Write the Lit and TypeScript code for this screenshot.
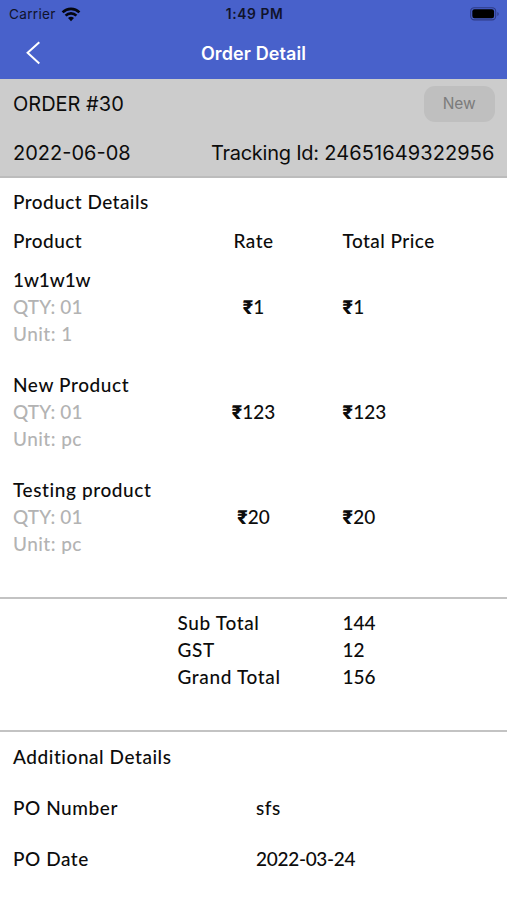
import { LitElement, html, css } from "lit";
import { customElement, property } from "lit/decorators.js";

interface Product {
  name: string;
  qty: string;
  unit: string;
  rate: number;
  total: number;
}

const PRODUCTS: Product[] = [
  { name: "1w1w1w", qty: "01", unit: "1", rate: 1, total: 1 },
  { name: "New Product", qty: "01", unit: "pc", rate: 123, total: 123 },
  { name: "Testing product", qty: "01", unit: "pc", rate: 20, total: 20 },
];

@customElement("status-bar")
class StatusBar extends LitElement {
  static styles = css`
    :host {
      display: grid;
      grid-template-columns: 1fr auto 1fr;
      align-items: center;
      height: 27px;
      padding: 0 7px 0 9px;
      color: #10132a;
      font: 400 13.6px/27px Inter, sans-serif;
    }
    .carrier {
      display: flex;
      align-items: center;
      gap: 5px;
      letter-spacing: 0.3px;
    }
    .label {
      padding-top: 1px;
    }
    .time {
      padding-top: 1px;
      font-weight: 600;
      font-size: 13.8px;
      letter-spacing: 0.6px;
    }
    .battery {
      justify-self: end;
    }
    svg {
      display: block;
    }
  `;
  render() {
    return html`
      <span class="carrier">
        <span class="label">Carrier</span>
        <svg width="20" height="15" viewBox="0 0 20 15" fill="none" stroke="#05060f" stroke-width="2.7">
          <path d="M1.6 5.4a11.9 11.9 0 0 1 16.8 0" />
          <path d="M4.6 8.6a7.7 7.7 0 0 1 10.8 0" />
          <path d="M10 14.2l-3-3.1a4.3 4.3 0 0 1 6 0z" fill="#05060f" stroke="none" />
        </svg>
      </span>
      <span class="time">1:49 PM</span>
      <svg class="battery" width="30" height="14" viewBox="0 0 30 14">
        <rect x="0.7" y="0.7" width="25" height="12.2" rx="3.6" fill="none" stroke="#2e3b86" stroke-width="1.1" />
        <rect x="2.3" y="2.3" width="21.8" height="9" rx="2.2" fill="#000" />
        <path d="M27.4 4.9a2.2 2.2 0 0 1 0 4z" fill="#2e3b86" />
      </svg>
    `;
  }
}

@customElement("product-row")
class ProductRow extends LitElement {
  @property({ attribute: false }) product!: Product;
  static styles = css`
    :host {
      display: grid;
      grid-template-columns: 180.5px 149px 1fr;
      align-items: center;
      height: 105.1px;
      box-sizing: border-box;
      padding-bottom: 24px;
    }
    .line {
      display: block;
      height: 27px;
      white-space: nowrap;
    }
    .name {
      letter-spacing: 0.6px;
    }
    .numeric {
      letter-spacing: -0.1px;
    }
    .muted {
      color: #b3b3b3;
      letter-spacing: 0.1px;
    }
    .unit {
      letter-spacing: 0.45px;
    }
    .money {
      display: block;
      letter-spacing: 0;
    }
    .rate {
      padding-right: 29px;
      text-align: center;
    }
    .symbol {
      font-family: Roboto, "Noto Sans", sans-serif;
      font-weight: 900;
      font-size: 19.5px;
      letter-spacing: 0.3px;
    }
  `;
  private money(value: number) {
    return html`<span class="symbol">₹</span>${value}`;
  }
  render() {
    const p = this.product;
    return html`
      <div>
        <span class="line name ${/\d/.test(p.name) ? "numeric" : ""}">${p.name}</span>
        <span class="line muted">QTY: ${p.qty}</span>
        <span class="line muted unit">Unit: ${p.unit}</span>
      </div>
      <span class="money rate">${this.money(p.rate)}</span>
      <span class="money">${this.money(p.total)}</span>
    `;
  }
}

@customElement("app-root")
class AppRoot extends LitElement {
  static styles = css`
    :host {
      display: flex;
      flex-direction: column;
      height: 900px;
      overflow: hidden;
      background: #fff;
      color: #0c0c0c;
      font: 500 19px/27px Lato, sans-serif;
      letter-spacing: 0.45px;
    }
    .top {
      height: 79px;
      background: #4861cb;
      letter-spacing: 0;
    }
    .nav {
      display: grid;
      grid-template-columns: 60px 1fr 60px;
      align-items: center;
      height: 52px;
    }
    .back {
      display: block;
      margin-left: 26px;
    }
    .title {
      padding-top: 1px;
      color: #fff;
      text-align: center;
      font: 600 18px/24px Inter, sans-serif;
      letter-spacing: 0.1px;
    }
    .summary {
      box-sizing: border-box;
      height: 99px;
      padding: 7px 12.5px 0 13px;
      background: #ccc;
      border-bottom: 2px solid #bcbcbc;
      font: 400 20px/25px Inter, sans-serif;
      letter-spacing: 0;
    }
    .pair {
      display: flex;
      justify-content: space-between;
      align-items: center;
      height: 36px;
    }
    .pair + .pair {
      margin-top: 13px;
    }
    .track {
      letter-spacing: -0.25px;
    }
    .track-id {
      letter-spacing: 0.1px;
    }
    .badge {
      width: 70.5px;
      height: 36px;
      border-radius: 11px;
      background: #bfbfbf;
      color: #7b7b7b;
      text-align: center;
      font-size: 15.5px;
      line-height: 36px;
    }
    .section {
      box-sizing: border-box;
      padding: 0 13px;
      border-bottom: 2px solid #c3c3c3;
    }
    .products {
      height: 421px;
      padding-top: 10px;
    }
    .head {
      display: grid;
      grid-template-columns: 180.5px 149px 1fr;
      margin: 12px 0;
    }
    .rate {
      padding-right: 29px;
      text-align: center;
    }
    .totals {
      display: grid;
      grid-template-columns: 165px 1fr;
      grid-auto-rows: 27px;
      height: 133px;
      padding: 10px 13px 0 177.5px;
      letter-spacing: 0.65px;
    }
    .amount {
      letter-spacing: 0;
    }
    .extra {
      border: 0;
      padding-top: 11px;
      letter-spacing: 0.55px;
    }
    .field {
      display: grid;
      grid-template-columns: 243px 1fr;
      margin-top: 24px;
    }
    .date-value {
      letter-spacing: -0.3px;
    }
  `;
  render() {
    return html`
      <header class="top">
        <status-bar></status-bar>
        <div class="nav">
          <svg class="back" width="15" height="24" viewBox="0 0 15 24" fill="none" stroke="#fff" stroke-width="2">
            <path d="M13.3 1.2L1.6 11.8L13.3 22.4" />
          </svg>
          <span class="title">Order Detail</span>
        </div>
      </header>
      <section class="summary">
        <div class="pair"><span>ORDER #30</span><span class="badge">New</span></div>
        <div class="pair">
          <span>2022-06-08</span>
          <span class="track">Tracking Id: <span class="track-id">24651649322956</span></span>
        </div>
      </section>
      <section class="section products">
        <div>Product Details</div>
        <div class="head">
          <span>Product</span><span class="rate">Rate</span><span>Total Price</span>
        </div>
        ${PRODUCTS.map((p) => html`<product-row .product=${p}></product-row>`)}
      </section>
      <section class="section totals">
        <span>Sub Total</span><span class="amount">144</span>
        <span>GST</span><span class="amount">12</span>
        <span>Grand Total</span><span class="amount">156</span>
      </section>
      <section class="section extra">
        <div>Additional Details</div>
        <div class="field"><span>PO Number</span><span>sfs</span></div>
        <div class="field"><span>PO Date</span><span class="date-value">2022-03-24</span></div>
      </section>
    `;
  }
}
